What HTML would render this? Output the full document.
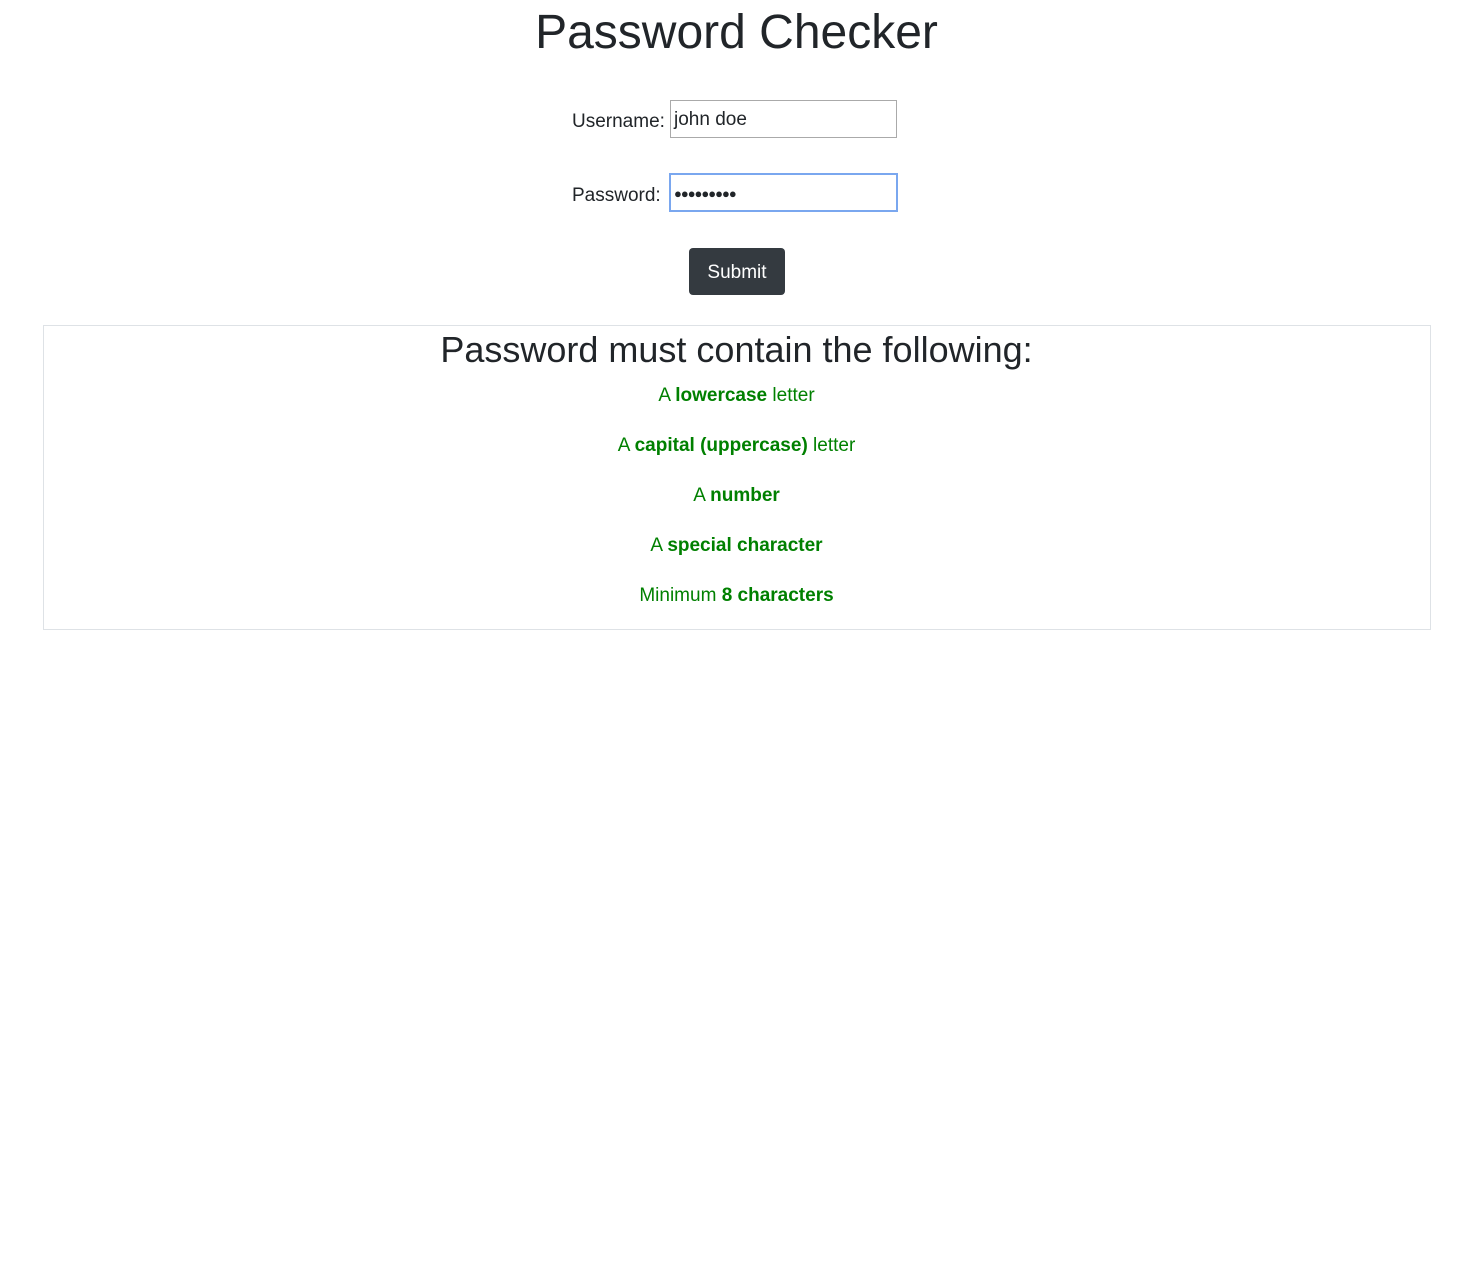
<!DOCTYPE html>
<html><head><meta charset="utf-8"><style>
body{margin:0;width:1473px;height:1261px;background:#fff;font-family:"Liberation Sans",sans-serif;color:#212529;position:relative}
.a{position:absolute;white-space:nowrap}
h1{position:absolute;margin:0;top:5px;left:0;width:1473px;text-align:center;font-size:48px;font-weight:500;line-height:56px}
.lbl{font-size:19px;line-height:24px}
.inp{position:absolute;box-sizing:border-box;background:#fff;font-size:19px;line-height:38px;padding-left:3px}
.btn{position:absolute;left:689px;top:248px;width:96px;height:47px;background:#343a40;border-radius:4px;color:#fff;font-size:19px;line-height:50px;text-align:center}
.box{position:absolute;left:43px;top:325px;width:1386px;height:303px;border:1px solid #dee2e6}
h2{position:absolute;margin:0;top:328px;left:0;width:1473px;text-align:center;font-size:36px;font-weight:500;line-height:44px}
.r{position:absolute;left:0;width:1473px;text-align:center;color:#008000;font-size:19px;line-height:24px}
</style></head><body>
<h1>Password Checker</h1>
<div class="a lbl" style="left:572px;top:110px">Username:</div>
<div class="inp" style="left:670px;top:100px;width:227px;height:38px;border:1px solid #aaa">john doe</div>
<div class="a lbl" style="left:572px;top:184px">Password:</div>
<div class="inp" style="left:669px;top:173px;width:229px;height:39px;border:2px solid #7aa7ef;font-size:13px;line-height:37px;letter-spacing:-1px">●●●●●●●●●</div>
<div class="btn">Submit</div>
<div class="box"></div>
<h2>Password must contain the following:</h2>
<div class="r" style="top:384px">A <b>lowercase</b> letter</div>
<div class="r" style="top:434px">A <b>capital (uppercase)</b> letter</div>
<div class="r" style="top:484px">A <b>number</b></div>
<div class="r" style="top:534px">A <b>special character</b></div>
<div class="r" style="top:584px">Minimum <b>8 characters</b></div>
</body></html>
